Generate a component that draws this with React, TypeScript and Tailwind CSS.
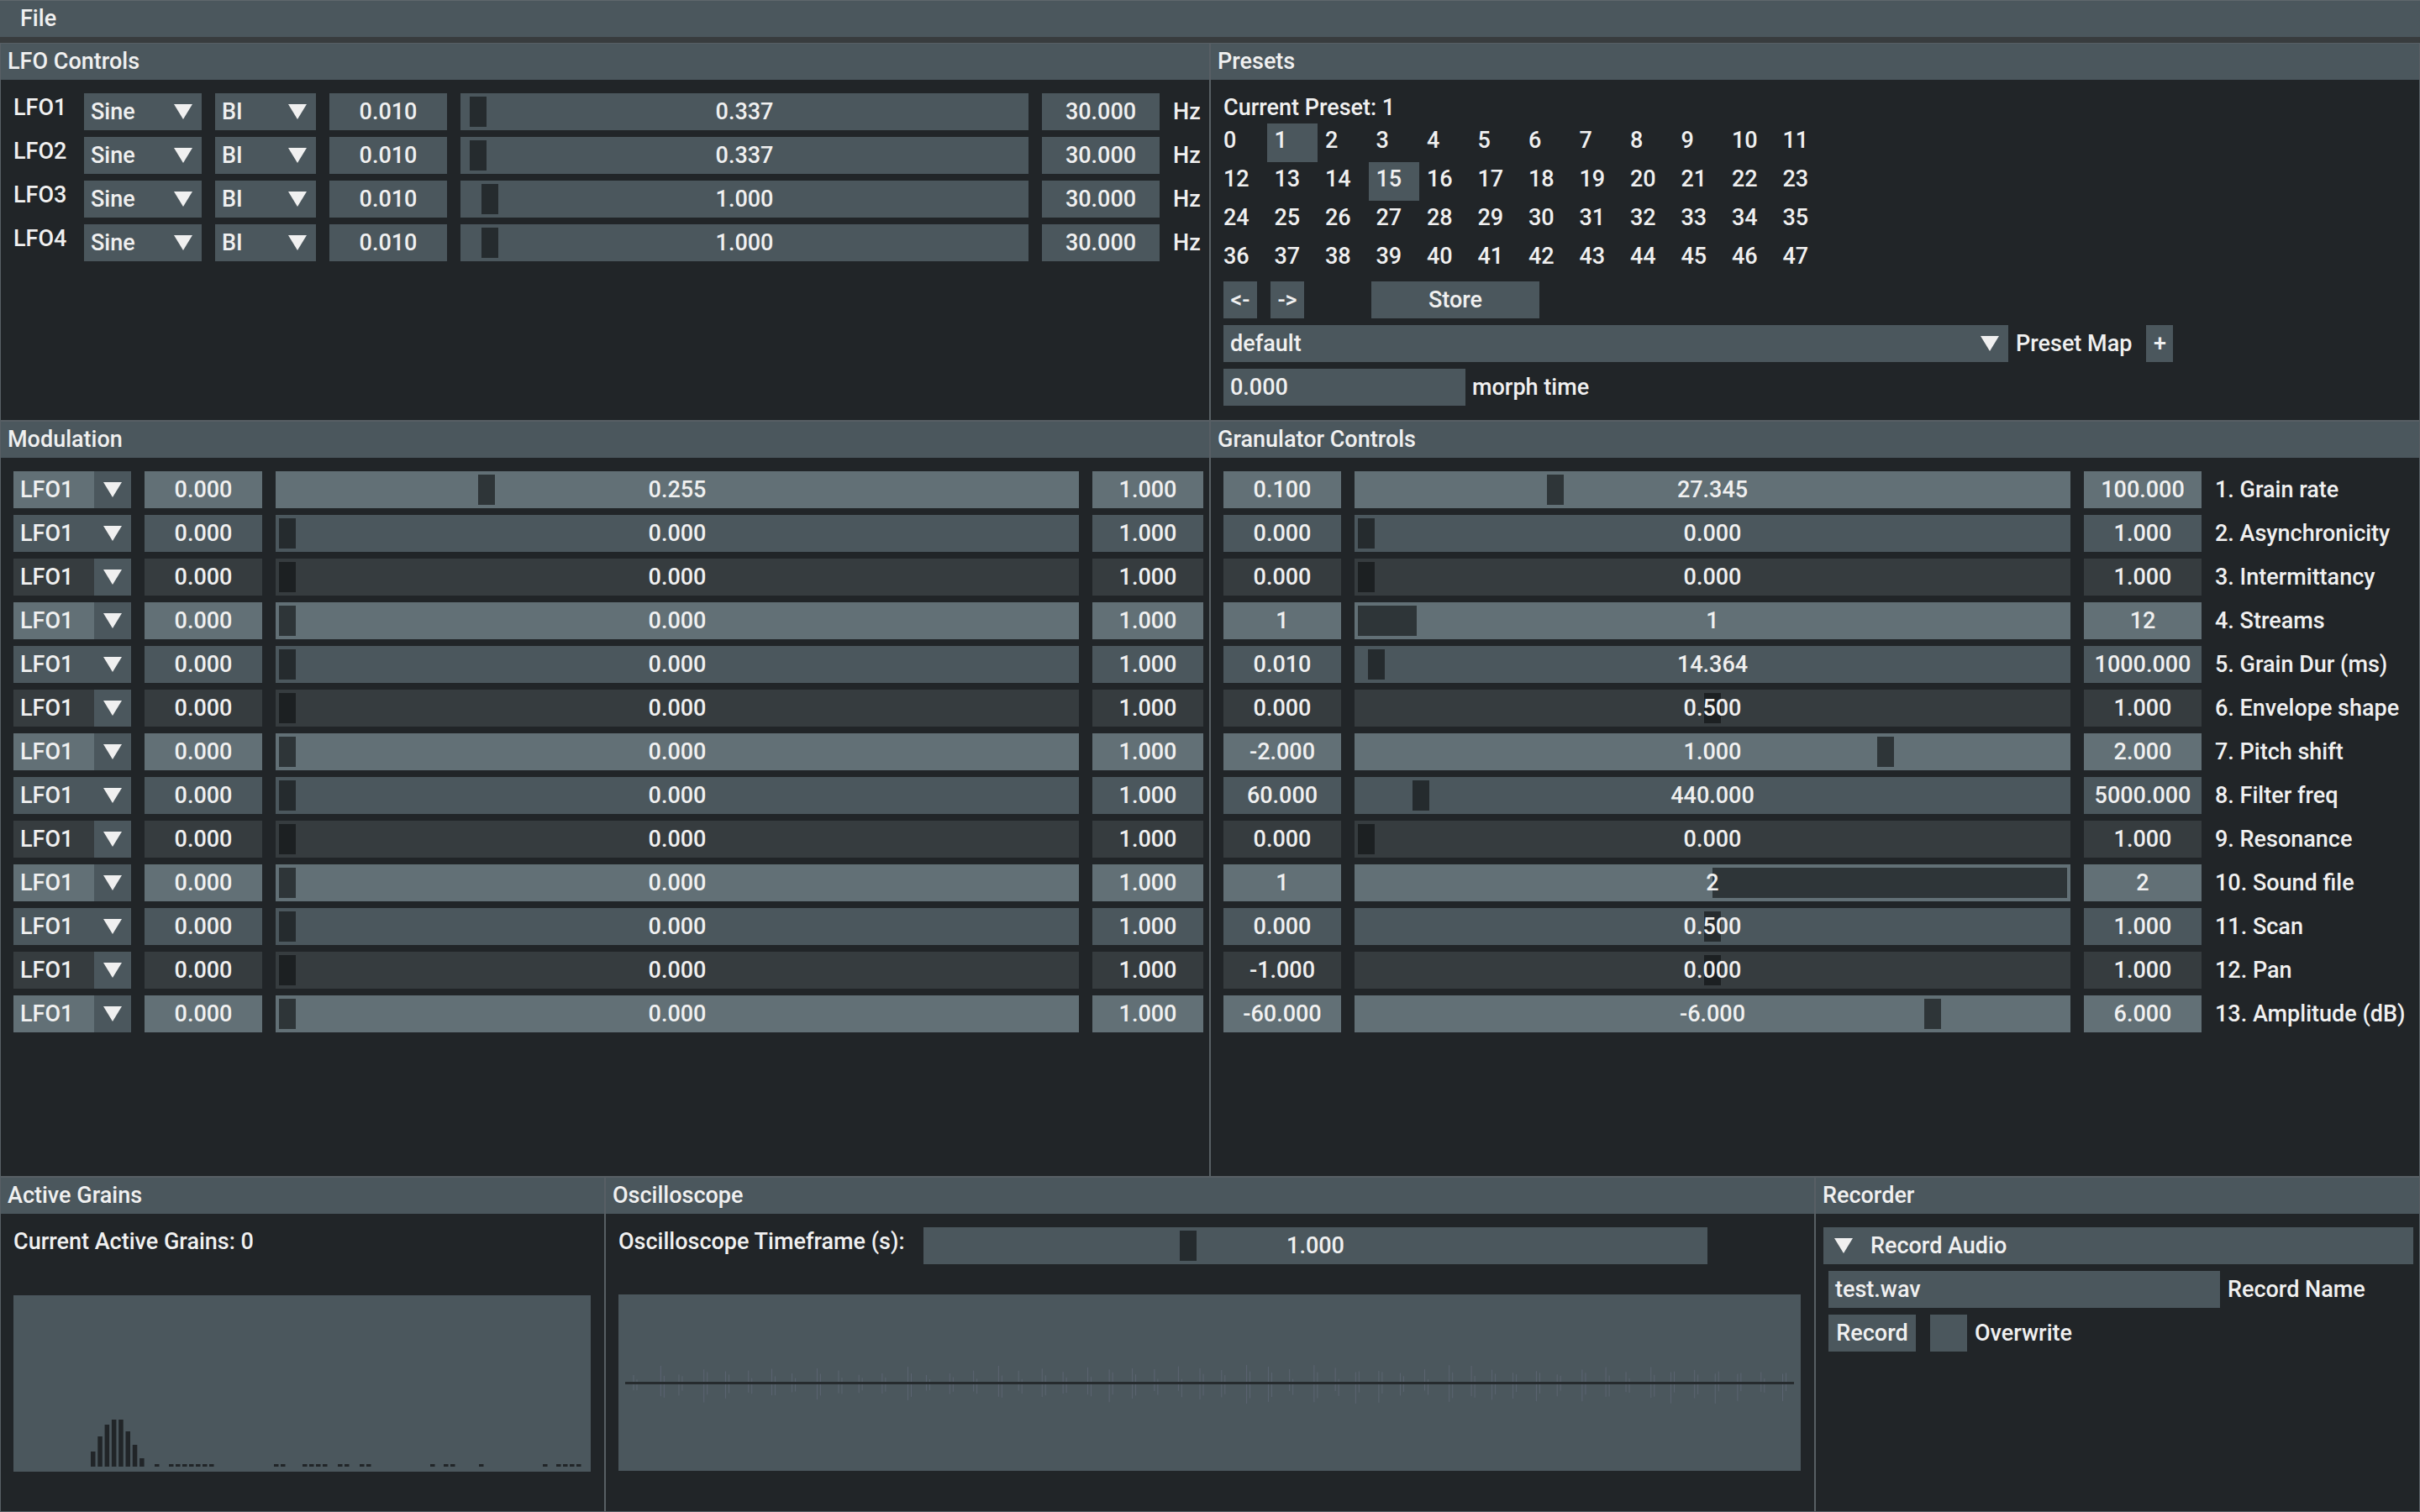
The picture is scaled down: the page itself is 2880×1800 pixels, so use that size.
import React from "react";

// frame colours cycle light / medium / dark down the rows
const ROW_BG = ["bg-[#627076]", "bg-[#4b575d]", "bg-[#363c3f]"];
const GRAB_BG = ["bg-[#2e3538]", "bg-[#252b2e]", "bg-[#1c2022]"];

type GranRow = [string, string, string, string, number, number];

const GRAN: GranRow[] = [
  ["0.100", "27.345", "100.000", "1. Grain rate", 0.2727, 20],
  ["0.000", "0.000", "1.000", "2. Asynchronicity", 0, 20],
  ["0.000", "0.000", "1.000", "3. Intermittancy", 0, 20],
  ["1", "1", "12", "4. Streams", 0, 70],
  ["0.010", "14.364", "1000.000", "5. Grain Dur (ms)", 0.0144, 20],
  ["0.000", "0.500", "1.000", "6. Envelope shape", 0.5, 20],
  ["-2.000", "1.000", "2.000", "7. Pitch shift", 0.75, 20],
  ["60.000", "440.000", "5000.000", "8. Filter freq", 0.079, 20],
  ["0.000", "0.000", "1.000", "9. Resonance", 0, 20],
  ["1", "2", "2", "10. Sound file", 1, 422],
  ["0.000", "0.500", "1.000", "11. Scan", 0.5, 20],
  ["-1.000", "0.000", "1.000", "12. Pan", 0.5, 20],
  ["-60.000", "-6.000", "6.000", "13. Amplitude (dB)", 0.818, 20],
];

const LFOS = [
  { name: "LFO1", value: "0.337", t: 0.0109 },
  { name: "LFO2", value: "0.337", t: 0.0109 },
  { name: "LFO3", value: "1.000", t: 0.033 },
  { name: "LFO4", value: "1.000", t: 0.033 },
];

const HIST_BARS = [18, 36, 50, 56, 56, 42, 26, 10];
const HIST_DASHES = [184, 201, 209, 217, 225, 233, 241, 249, 326, 334, 360, 368, 376, 384, 402, 410, 428, 436, 512, 528, 536, 570, 646, 662, 670, 678, 686];

function Arrow() {
  return (
    <svg width="22" height="18" viewBox="0 0 22 18" className="shrink-0">
      <polygon points="0,0 22,0 11,18" fill="#f0f0f0" />
    </svg>
  );
}

function Panel({ title, className = "", children }: { title: string; className?: string; children?: React.ReactNode }) {
  return (
    <section className={`flex flex-col min-w-0 min-h-0 border border-[#575f64] bg-[#212528] ${className}`}>
      <div className="h-[43px] shrink-0 bg-[#4b575d] px-[8px] flex items-center">{title}</div>
      <div className="flex-1 min-h-0 px-[15px] pt-[16px]">{children}</div>
    </section>
  );
}

function Box({ w, text, bg = "bg-[#4b575d]", align = "center" }: { w: number; text: string; bg?: string; align?: "center" | "left" }) {
  return (
    <div
      className={`h-[44px] shrink-0 flex items-center ${bg} ${align === "center" ? "justify-center" : "justify-start pl-[8px]"}`}
      style={{ width: w }}
    >
      {text}
    </div>
  );
}

function Combo({ w, text }: { w: number; text: string }) {
  return (
    <div className="h-[44px] shrink-0 flex items-center justify-between bg-[#4b575d] pl-[8px] pr-[11px]" style={{ width: w }}>
      <span>{text}</span>
      <Arrow />
    </div>
  );
}

function Slider({ w, t, text, grabW = 20, bg = "bg-[#4b575d]", grab = "bg-[#252b2e]" }: { w: number; t: number; text: string; grabW?: number; bg?: string; grab?: string }) {
  const left = 4 + t * (w - 8 - grabW);
  return (
    <div className={`relative h-[44px] shrink-0 flex items-center justify-center ${bg}`} style={{ width: w }}>
      <div className={`absolute top-[4px] bottom-[4px] ${grab}`} style={{ left, width: grabW }} />
      <span className="relative">{text}</span>
    </div>
  );
}

function LfoControls() {
  return (
    <div className="flex flex-col gap-[8px]">
      {LFOS.map((l) => (
        <div key={l.name} className="flex gap-[16px] h-[44px]">
          <span className="w-[68px] shrink-0 pt-[4px]">{l.name}</span>
          <Combo w={140} text="Sine" />
          <Combo w={120} text="BI" />
          <Box w={140} text="0.010" />
          <Slider w={676} t={l.t} text={l.value} />
          <Box w={140} text="30.000" />
          <span className="self-center shrink-0">Hz</span>
        </div>
      ))}
    </div>
  );
}

function Presets() {
  const nums = Array.from({ length: 48 }, (_, i) => i);
  return (
    <div className="flex flex-col">
      <p className="h-[27px] pt-[4px]">Current Preset: 1</p>
      <div className="mt-[9px] -ml-[9px] grid grid-cols-[repeat(12,60.5px)]">
        {nums.map((n) => (
          <div key={n} className={`h-[46px] pl-[9px] pt-[7px] ${n === 1 || n === 15 ? "bg-[#4b575d]" : ""}`}>
            {n}
          </div>
        ))}
      </div>
      <div className="mt-[4px] flex">
        <Box w={40} text="<-" />
        <div className="ml-[16px]">
          <Box w={40} text="->" />
        </div>
        <div className="ml-[80px]">
          <Box w={200} text="Store" />
        </div>
      </div>
      <div className="mt-[8px] flex items-center">
        <div className="h-[44px] w-[934px] flex items-center justify-between bg-[#4b575d] pl-[8px] pr-[11px]">
          <span>default</span>
          <Arrow />
        </div>
        <span className="ml-[9px]">Preset Map</span>
        <div className="ml-[17px]">
          <Box w={32} text="+" />
        </div>
      </div>
      <div className="mt-[8px] flex items-center">
        <Box w={288} text="0.000" align="left" />
        <span className="ml-[8px]">morph time</span>
      </div>
    </div>
  );
}

function Modulation() {
  return (
    <div className="flex flex-col gap-[8px]">
      {Array.from({ length: 13 }, (_, i) => (
        <div key={i} className="flex gap-[16px] h-[44px]">
          <div className="w-[140px] h-[44px] flex shrink-0">
            <div className={`w-[96px] flex items-center pl-[8px] ${ROW_BG[i % 3]}`}>LFO1</div>
            <div className="w-[44px] flex items-center justify-center bg-[#4b575d]">
              <Arrow />
            </div>
          </div>
          <Box w={140} text="0.000" bg={ROW_BG[i % 3]} />
          <Slider w={956} t={i === 0 ? 0.255 : 0} text={i === 0 ? "0.255" : "0.000"} bg={ROW_BG[i % 3]} grab={GRAB_BG[i % 3]} />
          <Box w={132} text="1.000" bg={ROW_BG[i % 3]} />
        </div>
      ))}
    </div>
  );
}

function Granulator() {
  return (
    <div className="flex flex-col gap-[8px]">
      {GRAN.map(([min, val, max, label, t, gw], i) => (
        <div key={label} className="flex items-center gap-[16px] h-[44px]">
          <Box w={140} text={min} bg={ROW_BG[i % 3]} />
          <Slider w={852} t={t} grabW={gw} text={val} bg={ROW_BG[i % 3]} grab={GRAB_BG[i % 3]} />
          <Box w={140} text={max} bg={ROW_BG[i % 3]} />
          <span className="whitespace-nowrap">{label}</span>
        </div>
      ))}
    </div>
  );
}

function ActiveGrains() {
  return (
    <div className="flex flex-col">
      <p className="h-[27px] pt-[4px]">Current Active Grains: 0</p>
      <div className="mt-[54px] w-[687px] h-[210px] bg-[#4b575d]">
        <svg width="687" height="210" viewBox="0 0 687 210">
          {HIST_BARS.map((h, i) => (
            <rect key={i} x={92 + i * 8.3} y={204 - h} width={5.5} height={h} fill="#212528" />
          ))}
          {HIST_DASHES.map((x, i) => (
            <rect key={`d${i}`} x={x - 16} y={201} width={5.5} height={3} fill="#212528" />
          ))}
        </svg>
      </div>
    </div>
  );
}

function Oscilloscope() {
  const ticks = Array.from({ length: 52 }, (_, i) => {
    const r = Math.abs(Math.sin(i * 12.9898) * 43758.5453) % 1;
    return { x: 18 + i * 26.8 + r * 6, up: 10 + r * 12, down: 8 + ((r * 7) % 1) * 16 };
  });
  return (
    <div className="flex flex-col">
      <div className="flex gap-[16px] h-[44px]">
        <span className="w-[347px] shrink-0 pt-[4px] whitespace-nowrap">Oscilloscope Timeframe (s):</span>
        <Slider w={933} t={0.333} text="1.000" />
      </div>
      <div className="mt-[36px] w-[1407px] h-[210px] bg-[#4b575d]">
        <svg width="1407" height="210" viewBox="0 0 1407 210">
          {ticks.map((k, i) => (
            <g key={i} stroke="#7a7f98" strokeOpacity="0.35" strokeWidth="1">
              <line x1={k.x} y1={106 - k.up} x2={k.x} y2={106 + k.down} />
              <line x1={k.x + 4} y1={106 - k.down * 0.6} x2={k.x + 4} y2={106 + k.up * 0.8} />
            </g>
          ))}
          <rect x="8" y="104" width="1391" height="3" fill="#262b2e" />
        </svg>
      </div>
    </div>
  );
}

function Recorder() {
  return (
    <div className="flex flex-col">
      <div className="-ml-[6px] w-[702px] h-[44px] flex items-center bg-[#4b575d] pl-[13px]">
        <Arrow />
        <span className="ml-[21px]">Record Audio</span>
      </div>
      <div className="mt-[8px] flex items-center">
        <Box w={466} text="test.wav" align="left" />
        <span className="ml-[9px]">Record Name</span>
      </div>
      <div className="mt-[8px] flex items-center">
        <Box w={104} text="Record" />
        <div className="ml-[17px] w-[44px] h-[44px] bg-[#4b575d]" />
        <span className="ml-[9px]">Overwrite</span>
      </div>
    </div>
  );
}

export default function App() {
  return (
    <div className="w-[2880px] h-[1800px] flex flex-col overflow-hidden bg-[#212528] text-[#f0f0f0] text-[27px] leading-[27px] font-medium font-['Roboto','Liberation_Sans',sans-serif]">
      <header className="h-[44px] shrink-0 bg-[#4b575d] border-t border-[#5f676c] flex items-center px-[24px]">File</header>
      <div className="h-[7px] shrink-0 bg-[#383c3e]" />
      <div className="h-[450px] shrink-0 grid grid-cols-[1440px_1440px]">
        <Panel title="LFO Controls">
          <LfoControls />
        </Panel>
        <Panel title="Presets">
          <Presets />
        </Panel>
      </div>
      <div className="h-[900px] shrink-0 grid grid-cols-[1440px_1440px]">
        <Panel title="Modulation">
          <Modulation />
        </Panel>
        <Panel title="Granulator Controls">
          <Granulator />
        </Panel>
      </div>
      <div className="h-[399px] shrink-0 grid grid-cols-[720px_1440px_720px]">
        <Panel title="Active Grains">
          <ActiveGrains />
        </Panel>
        <Panel title="Oscilloscope">
          <Oscilloscope />
        </Panel>
        <Panel title="Recorder">
          <Recorder />
        </Panel>
      </div>
    </div>
  );
}
